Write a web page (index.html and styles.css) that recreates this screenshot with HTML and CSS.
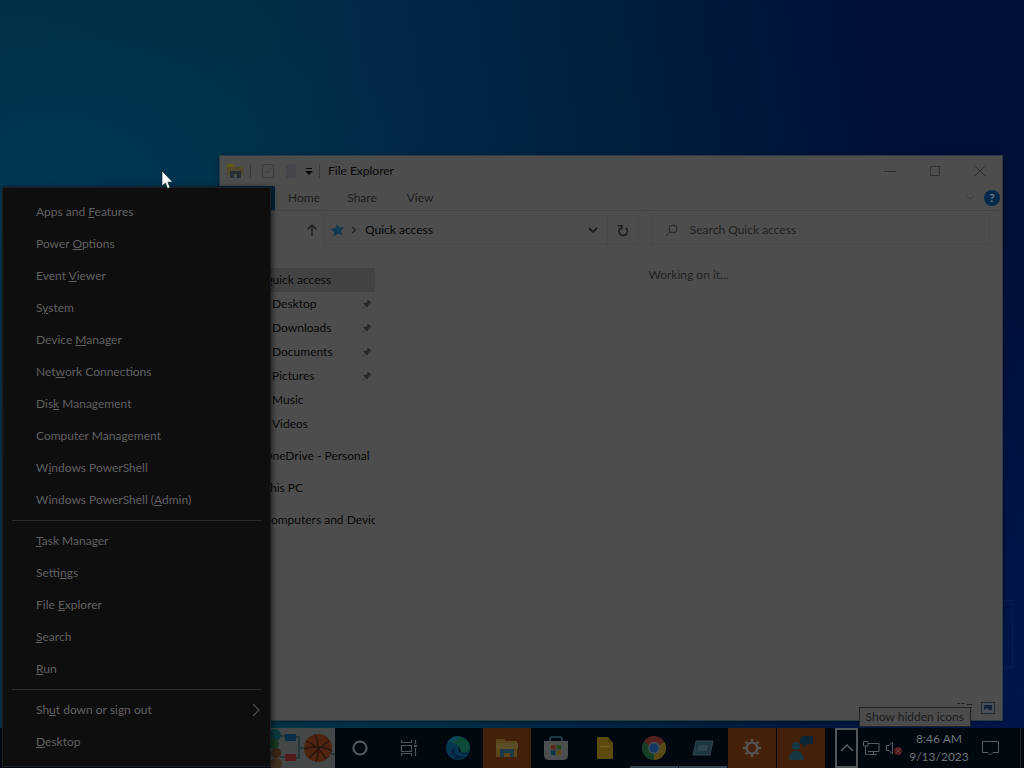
FILE: index.html
```html
<!DOCTYPE html>
<html lang="en">
<head>
  <meta charset="UTF-8" />
  <meta name="viewport" content="width=device-width, initial-scale=1.0"/>
  <title>Desktop</title>
  <link rel="stylesheet" href="styles.css">
</head>
<body>
  <svg class="symbols" aria-hidden="true">
    <symbol id="pin" viewBox="0 0 10 10">
      <path d="M6 0.5 L9.5 4 L8.5 4.6 L7.8 4.4 L6 6.2 L6 8 L5.2 8.6 L3.4 6.8 L0.8 9.4 L0.4 9 L3 6.4 L1.4 4.8 L2 4 L3.8 4 L5.6 2.2 L5.4 1.4 Z" fill="#2a2a2a"/>
    </symbol>
  </svg>

  <div class="desktop">
    <div class="outline"></div>

    <section class="window">
      <header class="titlebar">
        <svg width="18" height="16" viewBox="0 0 18 16">
          <path d="M1 2 H7 L9 4 H17 V12 H1 Z" fill="#504a2c"/>
          <path d="M1 1 H8 V4 H1 Z" fill="#5e5a10"/>
          <path d="M4 15 V8 H15 V15 H11 V11 H8 V15 Z" fill="#262e36"/>
        </svg>
        <span class="bar"></span>
        <svg class="props" width="14" height="16" viewBox="0 0 14 16" fill="none">
          <path d="M1.5 1.5 H12.5 V14.5 H1.5 Z" stroke="#363c42"/>
          <path d="M4 8 L6 10 L10 5" stroke="#34424e"/>
        </svg>
        <svg class="newfolder" width="12" height="14" viewBox="0 0 12 14">
          <path d="M1 3 L4 0 H11 V14 H1 Z" fill="#44464a"/>
        </svg>
        <svg class="customize" width="8" height="8" viewBox="0 0 8 8">
          <path d="M1 1 H7 V2 H1 Z M0 4 H8 L4 8 Z" fill="#080808"/>
        </svg>
        <span class="bar"></span>
        <h1>File Explorer</h1>
        <div class="controls">
          <button aria-label="Minimize"><svg width="12" height="12" viewBox="0 0 12 12"><path d="M0 6.5 H12" stroke="#303030"/></svg></button>
          <button aria-label="Maximize"><svg width="12" height="12" viewBox="0 0 12 12"><path d="M1.5 1.5 H10.5 V10.5 H1.5 Z" fill="none" stroke="#303030"/></svg></button>
          <button aria-label="Close"><svg width="12" height="12" viewBox="0 0 12 12"><path d="M1 1 L11 11 M11 1 L1 11" stroke="#303030"/></svg></button>
        </div>
      </header>

      <nav class="ribbon">
        <button class="file">File</button>
        <button>Home</button>
        <button>Share</button>
        <button>View</button>
        <div class="ribbon-right">
          <svg width="8" height="6" viewBox="0 0 8 6"><path d="M1 1.5 L4 4.5 L7 1.5" fill="none" stroke="#333"/></svg>
          <button class="help" aria-label="Help">?</button>
        </div>
      </nav>

      <div class="address">
        <button class="up" aria-label="Up"><svg width="12" height="14" viewBox="0 0 12 14"><path d="M6 13 V2 M1.5 6.5 L6 2 L10.5 6.5" fill="none" stroke="#202020" stroke-width="1.5"/></svg></button>
        <div class="path">
          <svg width="13" height="13" viewBox="0 0 13 13"><path d="M6 0 L8 3.2 L13 3.2 L10 7 L11.4 11.6 L7 9.6 L2.6 12.6 L3 8 L0 5 L4.4 4 Z" fill="#123a50"/></svg>
          <svg width="6" height="8" viewBox="0 0 6 8"><path d="M1 1 L4.5 4 L1 7" fill="none" stroke="#222" stroke-width="1.4"/></svg>
          <span>Quick access</span>
          <svg class="drop" width="10" height="8" viewBox="0 0 10 8"><path d="M1 2 L5 6 L9 2" fill="none" stroke="#1e1e1e" stroke-width="1.8"/></svg>
        </div>
        <button class="refresh" aria-label="Refresh"><svg width="12" height="13" viewBox="0 0 12 13"><path d="M8.800 4 A4.200 4.200 0 1 1 3.600 4 M1 1.700 H4.700 V5.400" fill="none" stroke="#1e1e1e" stroke-width="1.600"/></svg></button>
        <label class="search">
          <svg width="13" height="13" viewBox="0 0 13 13"><path d="M5 8 L1 12 M8 1 A4 4 0 1 0 8 9 A4 4 0 1 0 8 1 Z" fill="none" stroke="#262626"/></svg>
          <input type="text" placeholder="Search Quick access" aria-label="Search Quick access">
        </label>
      </div>

      <div class="panes">
        <ul class="tree">
          <li class="selected">Quick access</li>
          <li class="sub">Desktop <svg width="10" height="10"><use href="#pin"/></svg></li>
          <li class="sub">Downloads <svg width="10" height="10"><use href="#pin"/></svg></li>
          <li class="sub">Documents <svg width="10" height="10"><use href="#pin"/></svg></li>
          <li class="sub">Pictures <svg width="10" height="10"><use href="#pin"/></svg></li>
          <li class="sub">Music</li>
          <li class="sub">Videos</li>
          <li class="group">OneDrive - Personal</li>
          <li class="group">This PC</li>
          <li class="group">Computers and Devices</li>
        </ul>
        <p class="working">Working on it...</p>
      </div>

      <footer class="status">
        <svg width="16" height="12" viewBox="0 0 16 12"><path d="M0 1.5 H3 M0 5.5 H3 M0 9.5 H3 M4 1.5 H8 M4 5.5 H8 M4 9.5 H8 M10 2.5 H15 M10 5.5 H15 M10 9.5 H15" stroke="#222"/></svg>
        <svg width="14" height="12" viewBox="0 0 14 12"><path d="M0.5 0.5 H13.5 V11.5 H0.5 Z" fill="#4a5056" stroke="#222a32"/><path d="M3 3 H11 V8 H8 L6 6 L3 8 Z" fill="#10243c"/></svg>
      </footer>
    </section>

    <footer class="taskbar">
      <div class="news">
        <svg width="64" height="40" viewBox="0 0 64 40">
          <path d="M0 0 H64 V40 H0 Z" fill="#434748"/>
          <circle cx="4" cy="7" r="6" fill="#0c3a3c"/>
          <circle cx="3" cy="16" r="5" fill="#17391f"/>
          <circle cx="5" cy="25" r="5" fill="#3c2418"/>
          <circle cx="5" cy="36" r="6" fill="#40301f"/>
          <path d="M9 8 H14 M9 29 H14 M25 9 H28 V30 H25 M28 20 H34 M60 26 H64" fill="none" stroke="#1d3034" stroke-width="1.5"/>
          <rect x="14" y="6" width="11" height="7" rx="1" fill="#082d46"/>
          <rect x="14" y="26" width="11" height="7" rx="1" fill="#52181a"/>
          <circle cx="47" cy="20" r="14" fill="#4e2410"/>
          <path d="M35 13 Q48 18 55 31 M38 30 Q48 20 58 13 M44 6 Q50 20 45 34 M33 21 Q48 16 61 23" fill="none" stroke="#26130c" stroke-width="1.2"/>
        </svg>
      </div>
      <button class="task" aria-label="Cortana"><svg width="18" height="18" viewBox="0 0 18 18"><circle cx="9" cy="9" r="6.6" fill="none" stroke="#585c60" stroke-width="2"/></svg></button>
      <button class="task" aria-label="Task View"><svg width="18" height="18" viewBox="0 0 18 18"><path d="M1.5 1 V3.5 H11.5 V1 M1.5 6.5 H11.5 V12.5 H1.5 Z M1.5 17 V14.5 H11.5 V17 M15.5 1 V5 M15.5 9 V17" fill="none" stroke="#505456" stroke-width="1.2"/><path d="M14 6 H17 V8 H14 Z" fill="#505456"/></svg></button>
      <button class="task" aria-label="Edge"><svg width="24" height="24" viewBox="0 0 24 24">
        <circle cx="12" cy="12" r="12" fill="#073650"/>
        <path d="M2 6 A12 12 0 0 1 24 12 C24 16 19 18 14 15 C15 9 8 6 2 6 Z" fill="#0d4a38"/>
        <path d="M2 6 A12 12 0 0 1 12 0 C16 4 8 6 2 6 Z" fill="#0b4858"/>
        <path d="M9 11 C6 17 13 22 20 20 A12 12 0 0 1 9 23 C3 19 4 13 9 11 Z" fill="#05243f"/>
        <path d="M13 11 C11 15 15 18 22 17 C21 18 17 18 15 16 Z" fill="#01080f"/>
      </svg></button>
      <button class="task alert" aria-label="File Explorer"><svg width="22" height="20" viewBox="0 0 22 20">
        <path d="M0 1 H8 L10 3 H21 V19 H0 Z" fill="#5a4618"/>
        <path d="M0 5 H22 V11 H0 Z" fill="#5c4e28"/>
        <path d="M4 19 V11 H18 V19 H14 V15 H8 V19 Z" fill="#1b3a46"/>
      </svg></button>
      <button class="task" aria-label="Store"><svg width="24" height="24" viewBox="0 0 24 24">
        <path d="M6 5 V3 Q6 1 8 1 H16 Q18 1 18 3 V5" fill="none" stroke="#204956" stroke-width="1.6"/>
        <path d="M0 5 H24 V19 Q24 24 19 24 H5 Q0 24 0 19 Z" fill="#4c4e50"/>
        <path d="M7 9 H11.500 V13.500 H7 Z" fill="#582419"/><path d="M12.500 9 H17 V13.500 H12.500 Z" fill="#254517"/>
        <path d="M7 14.500 H11.500 V19 H7 Z" fill="#08344a"/><path d="M12.500 14.500 H17 V19 H12.500 Z" fill="#5a480a"/>
      </svg></button>
      <button class="task" aria-label="Notes"><svg width="16" height="22" viewBox="0 0 16 22"><path d="M0 0 H11 L16 6 V22 H0 Z" fill="#5c4a0a"/><path d="M11 0 V6 H16 Z" fill="#4e3e08"/><path d="M3 9.500 H12" stroke="#706126" stroke-width="1.500"/></svg></button>
      <button class="task open" aria-label="Chrome"><svg width="24" height="24" viewBox="0 0 24 24">
        <path d="M12 12 L1.6 6 A12 12 0 0 1 22.4 6 Z" fill="#55201d"/>
        <path d="M12 12 L22.4 6 A12 12 0 0 1 12 24 Z" fill="#584a14"/>
        <path d="M12 12 L12 24 A12 12 0 0 1 1.6 6 Z" fill="#173e26"/>
        <circle cx="12" cy="12" r="6" fill="#485054"/><circle cx="12" cy="12" r="4.600" fill="#143864"/>
      </svg></button>
      <button class="task open" aria-label="Remote session"><svg width="22" height="16" viewBox="0 0 22 16"><path d="M4 1 H21 L18 15 H1 Z" fill="#1f3642" stroke="#34454c"/><path d="M7 5 H16 L14.500 11 H5.500 Z" fill="#2e454d"/></svg></button>
      <button class="task alert" aria-label="Settings"><svg width="20" height="20" viewBox="0 0 20 20">
        <circle cx="10" cy="10" r="5.400" fill="none" stroke="#58524e" stroke-width="2.400"/>
        <path d="M10 1 V5 M10 15 V19 M1 10 H5 M15 10 H19 M3.600 3.600 L6.400 6.400 M13.600 13.600 L16.400 16.400 M3.600 16.400 L6.400 13.600 M13.600 6.400 L16.400 3.600" stroke="#58524e" stroke-width="2.400"/>
      </svg></button>
      <button class="task alert" aria-label="Feedback"><svg width="26" height="26" viewBox="0 0 26 26">
        <path d="M14 1 H25 V9 H19 L15 13 V9 H12 V4 Z" fill="#0c2636"/>
        <circle cx="8" cy="11" r="4" fill="#173842"/>
        <path d="M1 25 Q1 16 8 16 Q15 16 16 25 Z" fill="#173842"/>
      </svg></button>

      <div class="tray">
        <button class="chevron" aria-label="Show hidden icons"><svg width="14" height="8" viewBox="0 0 14 8"><path d="M1 7 L7 1 L13 7" fill="none" stroke="#606466" stroke-width="1.4"/></svg></button>
        <svg width="17" height="14" viewBox="0 0 17 14"><path d="M5 2.500 H16 V10.500 H5 M10.500 10.500 V13 M6 13.500 H14 M0.500 0.500 H5 V5 H0.500 Z M2.500 5 V13.500 H5" fill="none" stroke="#585c60"/></svg>
        <svg width="16" height="14" viewBox="0 0 16 14"><path d="M0.500 4.500 H3 L6.500 1 V13 L3 9.500 H0.500 Z" fill="none" stroke="#585c60"/><circle cx="12" cy="10" r="4" fill="#551b20"/><path d="M10 8 L14 12 M14 8 L10 12" stroke="#6c4448"/></svg>
        <time class="clock" datetime="2023-09-13T08:46">8:46 AM<br>9/13/2023</time>
        <svg class="note" width="17" height="16" viewBox="0 0 17 16"><path d="M0.500 1.500 H16.500 V12.500 H11 L8.500 15 L6 12.500 H0.500 Z" fill="none" stroke="#585c60"/></svg>
        <span class="peek"></span>
      </div>
    </footer>

    <div class="tooltip" role="tooltip">Show hidden icons</div>

    <div class="menu" role="menu">
      <button role="menuitem">Apps and <u>F</u>eatures</button>
      <button role="menuitem">Power <u>O</u>ptions</button>
      <button role="menuitem">Event <u>V</u>iewer</button>
      <button role="menuitem">S<u>y</u>stem</button>
      <button role="menuitem">Device <u>M</u>anager</button>
      <button role="menuitem">Net<u>w</u>ork Connections</button>
      <button role="menuitem">Dis<u>k</u> Management</button>
      <button role="menuitem">Computer Mana<u>g</u>ement</button>
      <button role="menuitem">W<u>i</u>ndows PowerShell</button>
      <button role="menuitem">Windows PowerShell (<u>A</u>dmin)</button>
      <hr>
      <button role="menuitem"><u>T</u>ask Manager</button>
      <button role="menuitem">Setti<u>n</u>gs</button>
      <button role="menuitem">File <u>E</u>xplorer</button>
      <button role="menuitem"><u>S</u>earch</button>
      <button role="menuitem"><u>R</u>un</button>
      <hr>
      <button role="menuitem" class="more">
        <span>Sh<u>u</u>t down or sign out</span>
        <svg width="8" height="14" viewBox="0 0 8 14"><path d="M1 1 L7 7 L1 13" fill="none" stroke="#505050" stroke-width="1.2"/></svg>
      </button>
      <button role="menuitem"><u>D</u>esktop</button>
    </div>

    <svg class="cursor" width="12" height="20" viewBox="0 0 12 20"><path d="M1 1 L1 16 L4.400 13 L6.600 18.500 L9 17.500 L6.800 12.200 L11.500 12 Z" fill="#fff" stroke="#0a1a24" stroke-width="0.600"/></svg>
  </div>
</body>
</html>
```
FILE: styles.css
```css
* {
  box-sizing: border-box;
}

body {
  margin: 0;
  font-family: Lato, "Open Sans", sans-serif;
  font-size: 12px;
  line-height: 16px;
  color: #080808;
}

button, input {
  font: inherit;
  color: inherit;
  background: none;
  border: 0;
  padding: 0;
}

svg {
  flex: none;
}

.symbols {
  position: absolute;
  width: 0;
  height: 0;
}

.desktop {
  position: relative;
  display: flex;
  flex-direction: column;
  justify-content: flex-end;
  height: 100vh;
  min-height: 600px;
  overflow: hidden;
  background:
    radial-gradient(ellipse 30% 15% at 28% 96%, #003548, transparent),
    radial-gradient(ellipse 35% 30% at 5% 24%, rgba(0, 58, 92, 0.6), transparent),
    radial-gradient(ellipse 30% 60% at 100% 90%, rgba(0, 26, 84, 0.7), transparent),
    linear-gradient(82deg, #003044 0%, #002f46 30%, #002848 45%, #00213f 62%, #00163a 76%, #000e3a 90%, #001036 100%);
}

.outline {
  position: absolute;
  right: 11px;
  bottom: 100px;
  width: 12px;
  height: 68px;
  border: 1px dotted #12264c;
}

/* explorer window */
.window {
  position: absolute;
  top: 155px;
  left: 219px;
  right: 21px;
  bottom: 47px;
  display: flex;
  flex-direction: column;
  background: #4d4d4d;
  border: 1px solid #2c3c46;
  box-shadow: 0 1px 5px rgba(0, 0, 0, 0.4);
}

.titlebar {
  display: flex;
  align-items: center;
  height: 30px;
  padding-left: 6px;
}

.titlebar h1 {
  margin: 0 0 0 8px;
  font-size: 12px;
  font-weight: normal;
}

.bar {
  width: 1px;
  height: 14px;
  margin-left: 6px;
  background: #3a3a3a;
}

.props {
  margin-left: 10px;
}

.newfolder {
  margin-left: 10px;
}

.customize {
  margin-left: 8px;
}

.controls {
  display: flex;
  margin-left: auto;
}

.controls button {
  display: grid;
  place-items: center;
  width: 45px;
  height: 30px;
}

.ribbon {
  display: flex;
  height: 25px;
  border-bottom: 1px solid #444;
  color: #1c1c1c;
}

.ribbon button {
  width: 58px;
}

.ribbon .file {
  width: 55px;
  background: #03263e;
  color: #4d4d4d;
}

.ribbon-right {
  display: flex;
  align-items: center;
  gap: 10px;
  margin-left: auto;
  padding-right: 2px;
}

.ribbon .help {
  width: 16px;
  height: 16px;
  border-radius: 50%;
  background: #02294a;
  color: #657a88;
  font-weight: bold;
}

.address {
  display: flex;
  align-items: center;
  height: 38px;
  padding: 0 12px 0 86px;
}

.address svg {
  display: block;
}

.path {
  display: flex;
  flex: 362;
  align-items: center;
  height: 30px;
  margin-left: 6px;
  padding: 0 9px 0 6px;
  border: 1px solid #484848;
}

.path span {
  margin-left: 8px;
}

.path svg + svg {
  margin-left: 7px;
}

.path .drop {
  margin-left: auto;
}

.refresh {
  display: grid;
  place-items: center;
  width: 31px;
  height: 30px;
  border: 1px solid #484848;
  border-left: 0;
}

.search {
  display: flex;
  flex: 440;
  align-items: center;
  gap: 12px;
  height: 30px;
  margin-left: 12px;
  padding-left: 13px;
  border: 1px solid #484848;
}

.search input {
  flex: 1;
  min-width: 0;
  outline: 0;
}

.search input::placeholder {
  color: #222;
  opacity: 1;
}

.panes {
  display: flex;
  flex: 1;
  min-height: 0;
  padding-top: 19px;
}

.tree {
  width: 155px;
  margin: 0;
  padding: 0;
  overflow: hidden;
  list-style: none;
  white-space: nowrap;
}

.tree li {
  display: flex;
  align-items: center;
  justify-content: space-between;
  height: 24px;
  padding: 0 3px 0 43px;
}

.tree .sub {
  padding-left: 52px;
}

.tree .group {
  margin-top: 8px;
}

.tree .selected {
  background: #434343;
}

.working {
  flex: 1;
  margin: 0;
  text-align: center;
  line-height: 14px;
  color: #222;
}

.status {
  display: flex;
  align-items: center;
  justify-content: flex-end;
  gap: 8px;
  height: 24px;
  padding-right: 7px;
}

/* taskbar */
.taskbar {
  position: relative;
  display: flex;
  gap: 1px;
  height: 40px;
  background: #010810;
  color: #707376;
}

.news {
  display: flex;
  justify-content: flex-end;
  width: 335px;
}

.task {
  display: grid;
  place-items: center;
  width: 48px;
}

.alert {
  background: #42200a;
}

.open {
  border-bottom: 2px solid #334452;
  padding-top: 2px;
}

.tray {
  display: flex;
  align-items: center;
  margin-left: auto;
}

.chevron {
  display: grid;
  place-items: center;
  width: 23px;
  height: 40px;
  margin-right: 5px;
  border: 2px solid #54585c;
}

.tray svg + svg {
  margin-left: 6px;
}

.clock {
  width: 64px;
  margin-left: 5px;
  text-align: center;
  line-height: 18px;
}

.tray .note {
  margin-left: 11px;
}

.peek {
  width: 4px;
  height: 40px;
  margin-left: 21px;
  border-left: 1px solid #22282e;
}

.tooltip {
  position: absolute;
  right: 53px;
  bottom: 41px;
  padding: 1px 6px;
  border: 1px solid #222;
  background: #4b4b4b;
  color: #1c1c1c;
}

/* Win + X menu */
.menu {
  position: absolute;
  left: 2px;
  bottom: 1px;
  width: 269px;
  padding: 8px 0;
  border: 1px solid #1c1e20;
  background: #0e0e0e;
  color: #606060;
  box-shadow: 2px 0 5px rgba(0, 0, 0, 0.5);
}

.menu button {
  display: block;
  width: 100%;
  height: 32px;
  padding: 0 10px 0 33px;
  text-align: left;
}

.menu .more {
  display: flex;
  align-items: center;
  justify-content: space-between;
}

.menu hr {
  height: 1px;
  margin: 4px 9px;
  border: 0;
  background: #2c2c2c;
}

.cursor {
  position: absolute;
  left: 161px;
  top: 170px;
}
```
